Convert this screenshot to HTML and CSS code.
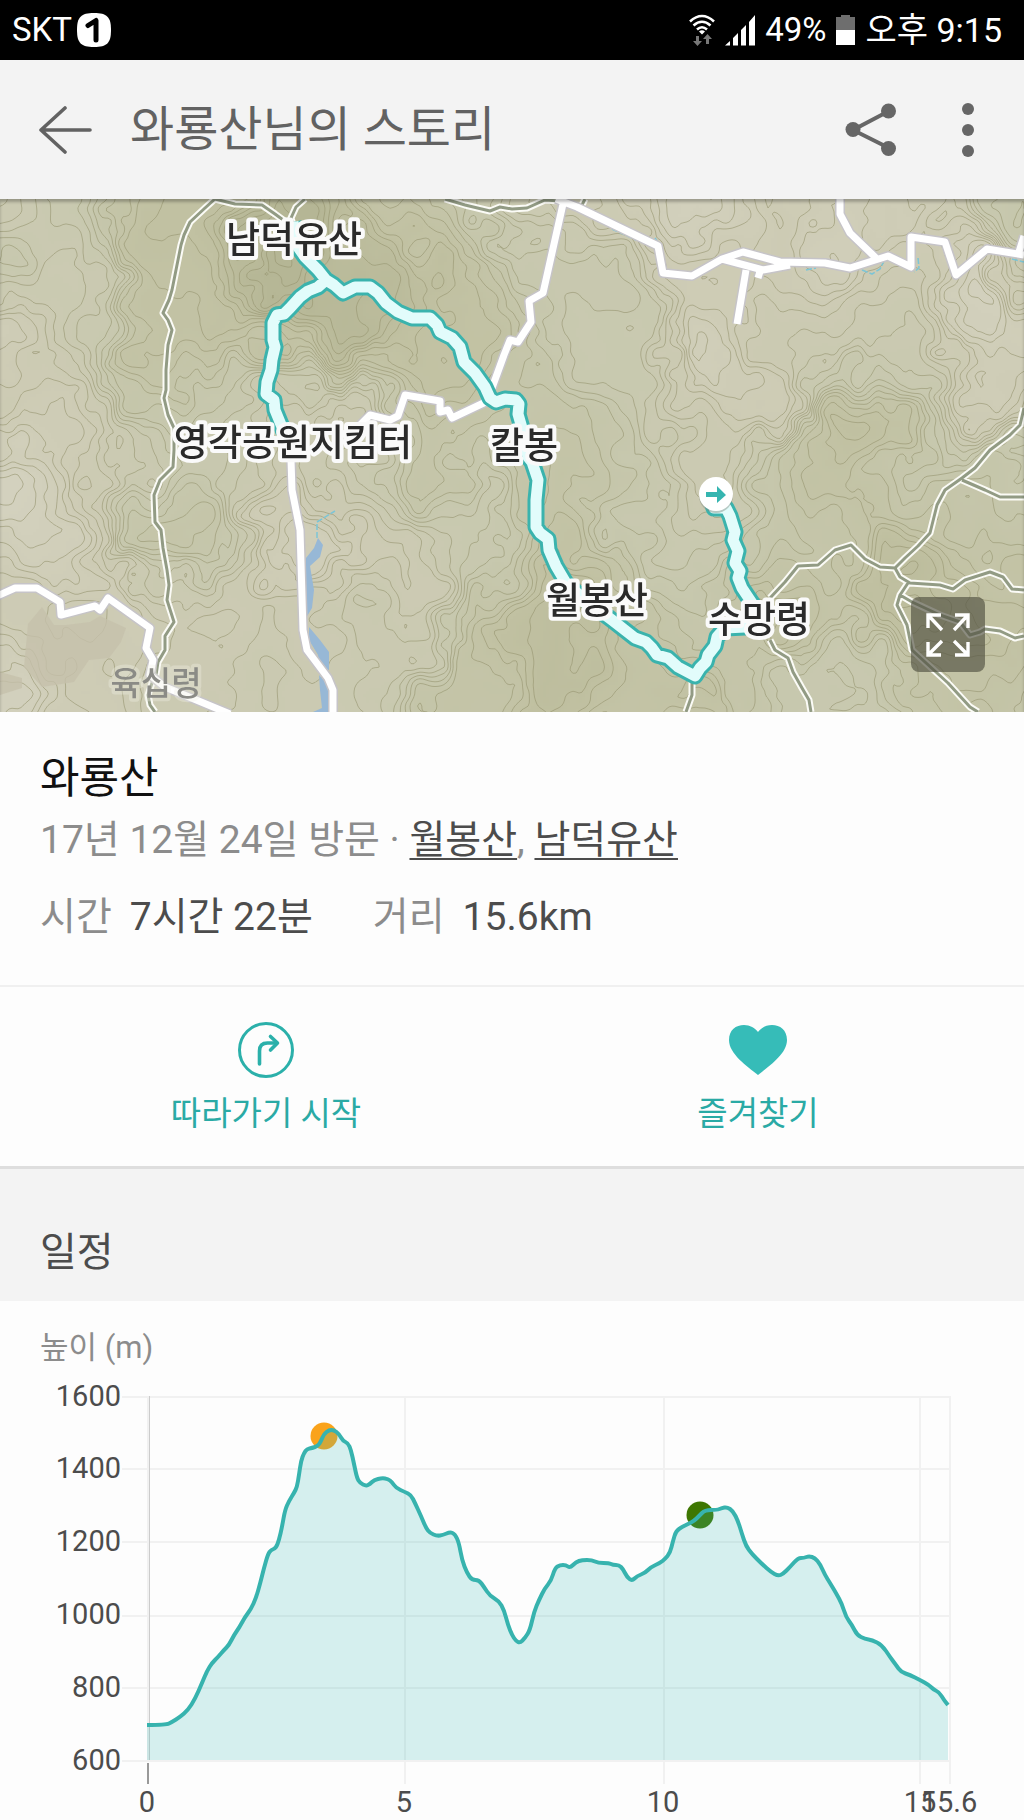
FILE: index.html
```html
<!DOCTYPE html>
<html lang="ko">
<head>
  <meta charset="UTF-8">
  <meta name="viewport" content="width=device-width, initial-scale=1.0">
  <title>와룡산님의 스토리</title>
  <link rel="stylesheet" href="styles.css">
</head>
<body>
  <div class="status-bar">
    <div class="status-left">
      <span class="carrier">SKT</span>
      <svg class="sim-icon" viewBox="0 0 34 34" aria-hidden="true">
        <path d="M17 0C30 0 34 4 34 17S30 34 17 34 0 30 0 17 4 0 17 0z" fill="#fff"/>
        <path d="M11 12.500 19 7.500V27" fill="none" stroke="#000" stroke-width="5" stroke-linecap="round" stroke-linejoin="round"/>
      </svg>
    </div>
    <div class="status-right">
      <svg class="wifi-icon" viewBox="0 0 26 32" aria-hidden="true">
        <g fill="none" stroke="#fff" stroke-width="2.600">
          <path d="M1 7.500Q13-3.500 25 7.500"/>
          <path d="M4.500 11.500Q13 4 21.500 11.500"/>
          <path d="M8 15.500Q13 11 18 15.500"/>
        </g>
        <path d="M10 17.500Q13 15 16 17.500L13 20.500z" fill="#fff"/>
        <path d="M7 22h3v5h3l-4.500 5L4 27h3zM17 30v-5h-3l4.500-5 4.500 5h-3v5z" fill="#777"/>
      </svg>
      <svg class="signal-icon" viewBox="0 0 30 31" aria-hidden="true">
        <path d="M0 30.500 5 26v4.500zM8 23l5-5v12.500H8zM16 15l5-5v20.500h-5zM24 7l6-7v30.500h-6z" fill="#fff"/>
      </svg>
      <span class="percent">49%</span>
      <svg class="battery-icon" viewBox="0 0 19 30" aria-hidden="true">
        <path d="M5 0h9v2h5v13H0V2h5z" fill="#6e6e6e"/>
        <path d="M0 15h19v15H0z" fill="#fff"/>
      </svg>
      <span class="clock">오후 9:15</span>
    </div>
  </div>

  <header class="app-bar">
    <button class="icon-btn back-btn" type="button" aria-label="뒤로">
      <svg viewBox="0 0 54 48" width="54" height="48">
        <path d="M51 24H2M26 2 2 24l24 22" fill="none" stroke="#626262" stroke-width="3.600" stroke-linecap="round" stroke-linejoin="round"/>
      </svg>
    </button>
    <h1>와룡산님의 스토리</h1>
    <button class="icon-btn share-btn" type="button" aria-label="공유">
      <svg viewBox="0 0 52 54" width="52" height="54">
        <path d="M44 8 8 27l36 18" fill="none" stroke="#666" stroke-width="4"/>
        <g fill="#666"><circle cx="43.500" cy="8" r="7.500"/><circle cx="8" cy="26.500" r="7.500"/><circle cx="43.500" cy="45.500" r="7.500"/></g>
      </svg>
    </button>
    <button class="icon-btn more-btn" type="button" aria-label="더보기">
      <svg viewBox="0 0 12 54" width="12" height="54">
        <g fill="#666"><circle cx="6" cy="6" r="6"/><circle cx="6" cy="27" r="6"/><circle cx="6" cy="48" r="6"/></g>
      </svg>
    </button>
  </header>

  <main>
    <section class="map">
      <canvas id="terrain" class="terrain" width="1024" height="513"></canvas>
      <svg class="map-lines" viewBox="0 199 1024 513">
        <!-- farmland -->
        <path d="M28 624l14-17 12 18 12 0 24-3 10-6 26 12-5 14-12 16-20 2-15 22-32 5-18-20zM0 672l22 6v10L0 695z" fill="#c5c1ab" opacity=".8"/>
        <!-- water -->
        <path d="M318 538l5 7-3 12-10 9 4 24-2 18-6 10v-60l8-10zM309 627l11 13 9 12v18l-9-2-2-13-9-15zM319 675l9 10v27h-15l9-4-2-18z" fill="#97b8d6"/>
        <g class="stream">
          <path d="M317 538v-16l18-11"/>
          <path d="M612 229l24 11M655 238l4 6M806 270l10-2M862 270l10 4 8-5 4-8M918 258l1 10-5 4M1012 259l12 3"/>
        </g>
        <!-- hiking paths -->
        <g class="path-edge">
          <path id="hiking" d="M215 199 205 208 190 222 184 235 181 245 177 265 172 290 169 300 163 313 168 320 172 330 168 345 166 370 166 390 164 398 168 415 174 428 174 450 173 467 160 480 154 495 155 522 161 530 163 548 167 570 169 585 167 600 174 622 165 636 165 650 158 662 156 675 152 683 148 695 150 705 155 712
            M215 199 235 204 262 205 275 214 290 225M305 199 296 207 291 218 294 228
            M445 199 465 205 490 211 500 207 512 209 527 208 545 200 560 201M585 199 582 205 583 212
            M770 598 785 582 798 566 818 565 835 550 851 545 865 559 880 567 895 568 905 558 918 546 930 533 937 505 945 490 962 478 975 468 990 450 1010 435 1020 425 1024 408
            M962 480 985 490 1000 497 1024 497
            M895 568 900 577 910 583 940 585 953 589 965 580 990 572 1003 577 1012 589 1024 590
            M908 583 900 595 897 605 907 625 912 650 925 662 948 683 970 707 978 712
            M900 595 912 602 940 615 960 622 970 635 980 632 985 629 1000 631 1015 638 1024 636
            M770 640 775 650 788 658 793 672 802 688 809 700 811 712
            M692 680 692 695 686 712"/>
        </g>
        <use class="path-core" href="#hiking"/>
        <!-- roads -->
        <g class="road-edge">
          <path id="roads" d="M556 199 577 207 658 246 663 273 692 276 722 259 743 252 780 262 825 263 850 268 888 256 911 267 911 237 945 242 956 275 987 249 1024 255
            M722 259 763 270 790 265M761 268 758 278M746 270 737 324
            M840 195 840 214 850 233 876 258
            M563 204 543 293 529 301 531 322 518 342 510 340 504 355 492 388
            M492 399 452 418 448 410 440 412 440 401 405 395 398 416 390 420 370 415 360 425
            M1024 236 1018 255
            M291 460 292 490 300 530 303 630 307 650 328 678 333 690 333 712
            M-5 597 15 588 37 588 60 602 61 615 95 606 100 610 108 598 150 628 146 648 153 660 150 675 165 687 230 714"/>
        </g>
        <use class="road-core" href="#roads"/>
        <!-- recorded route -->
        <g class="route-edge">
          <path id="route" d="M293 222 298 247 305 257 318 270 326 280 318 287 308 291 300 297 290 308 284 314 277 315 273 323 273 340 275 347 272 360 271 370 267 382 266 394 274 400 275 410 284 432
            M326 280 334 285 343 293 355 287 370 287 378 293 386 303 398 312 412 318 430 318 437 325 440 332 452 338 460 347 464 362 475 373 485 387 490 398 496 402 505 399 516 400 519 404 518 414 522 428 528 457 532 462 538 480 536 500 536 527 540 533 548 539 549 550 556 566 566 583 576 592 592 605 612 620 635 638 646 642 652 648 657 655 668 658 678 667 695 676 700 668 706 662 708 655 715 646 717 637 725 628 745 627 760 615 750 600 742 588 738 578 740 571 735 563 738 551 733 540 735 532 730 516 726 508 714 508 711 498"/>
        </g>
        <use class="route-core" href="#route"/>
        <circle cx="716" cy="496" r="17" fill="#7f8b80" opacity=".45"/>
        <circle cx="716" cy="494" r="17" fill="#fff"/>
        <path d="M706 492h11v-6l9 9-9 8v-6h-11z" fill="#35b5b0"/>
        <!-- place names -->
        <g class="place">
          <text x="294" y="253">남덕유산</text>
          <text x="293" y="456">영각공원지킴터</text>
          <text x="524" y="459">칼봉</text>
          <text x="597" y="614">월봉산</text>
          <text x="759" y="633">수망령</text>
        </g>
        <text class="place-minor" x="156" y="695">육십령</text>
      </svg>
      <button class="expand-btn" type="button" aria-label="지도 크게 보기">
        <svg viewBox="0 0 44 44" width="44" height="44">
          <path d="M16 17 2 2M2 15V2h13M28 17 42 2M29 2h13v13M16 28 2 42M2 29v13h13M28 28l14 14M29 42h13V29" fill="none" stroke="#fff" stroke-width="3.400"/>
        </svg>
      </button>
    </section>

    <section class="info">
      <h2>와룡산</h2>
      <p class="visit">17년 12월 24일 방문 · <a href="#">월봉산</a>, <a href="#">남덕유산</a></p>
      <dl class="stats">
        <div><dt>시간</dt><dd>7시간 22분</dd></div>
        <div><dt>거리</dt><dd>15.6km</dd></div>
      </dl>
    </section>

    <div class="actions">
      <button type="button">
        <svg viewBox="0 0 56 56" width="56" height="56" aria-hidden="true">
          <g fill="none" stroke="#2bb0aa" stroke-width="3">
            <circle cx="28" cy="28" r="26.500"/>
            <path d="M21.500 42V29q0-8 8-8h9" stroke-width="3.600" stroke-linecap="round"/>
            <path d="M32.500 14.500l7 6.500-7 7" stroke-width="3.600" stroke-linecap="round" stroke-linejoin="round"/>
          </g>
        </svg>
        <span>따라가기 시작</span>
      </button>
      <button type="button">
        <svg viewBox="0 0 58 56" width="58" height="56" aria-hidden="true">
          <path d="M29 53C18 44 0 32 0 18 0 8 7 3 15 3c6 0 11 3 14 7 3-4 8-7 14-7 8 0 15 5 15 15 0 14-18 26-29 35z" fill="#36bcb8"/>
        </svg>
        <span>즐겨찾기</span>
      </button>
    </div>

    <h2 class="section-title">일정</h2>

    <section class="elevation">
      <h3>높이 (m)</h3>
      <svg class="chart" viewBox="0 1380 1024 440" role="img" aria-label="고도 그래프">
        <g class="grid">
          <path d="M122 1397H951M122 1469H951M122 1542H951M122 1616H951M122 1688H951M122 1761H951"/>
          <path d="M148 1396V1762M405 1396V1784M664 1396V1784M920 1396V1784M950 1396V1784"/>
        </g>
        <path d="M149.500 1396V1760" stroke="#ccc"/>
        <path d="M148 1763V1784" stroke="#999" stroke-width="2"/>
        <circle cx="324" cy="1436" r="13.500" fill="#faa31b"/>
        <circle cx="700" cy="1515" r="13.500" fill="#3e7702"/>
        <path id="chart-area" class="area"/>
        <path id="chart-line" class="line"/>
        <g class="axis-y">
          <text x="121" y="1406">1600</text>
          <text x="121" y="1478">1400</text>
          <text x="121" y="1551">1200</text>
          <text x="121" y="1624">1000</text>
          <text x="121" y="1697">800</text>
          <text x="121" y="1770">600</text>
        </g>
        <g class="axis-x">
          <text x="147" y="1812">0</text>
          <text x="404" y="1812">5</text>
          <text x="663" y="1812">10</text>
          <text x="920" y="1812">15</text>
          <text x="949" y="1812">15.6</text>
        </g>
      </svg>
    </section>
  </main>

  <script src="story.js"></script>
</body>
</html>
```
FILE: styles.css
```css
* {
  box-sizing: border-box;
}
body {
  margin: 0;
  background: #fdfdfd;
  color: #4c4c4c;
  font-family: Roboto, "Noto Sans CJK KR", sans-serif;
}
h1, h2, h3, p, dl, dd {
  margin: 0;
  font-weight: 400;
}
button {
  padding: 0;
  border: none;
  background: none;
  font-family: inherit;
  cursor: pointer;
}
svg {
  display: block;
}

/* status bar */
.status-bar {
  display: flex;
  justify-content: space-between;
  align-items: center;
  height: 60px;
  padding: 0 22px 0 12px;
  background: #000;
  color: #fff;
  font-size: 34px;
  line-height: 60px;
}
.status-left, .status-right {
  display: flex;
  align-items: center;
}
.status-left {
  gap: 5px;
}
.status-right {
  gap: 10px;
}
.carrier, .percent {
  font-size: 33px;
}
.sim-icon {
  width: 34px;
  height: 34px;
}
.wifi-icon {
  width: 26px;
  height: 32px;
}
.signal-icon {
  width: 30px;
  height: 31px;
}
.battery-icon {
  width: 19px;
  height: 30px;
}

/* app bar */
.app-bar {
  display: flex;
  align-items: center;
  height: 139px;
  padding: 0 50px 0 39px;
  background: #f3f3f3;
}
.app-bar h1 {
  flex: 1;
  margin-left: 37px;
  color: #626262;
  font-size: 48px;
  line-height: 64px;
}
.more-btn {
  margin-left: 65px;
}

/* map */
.map {
  position: relative;
  overflow: hidden;
  background: #c8c8ae;
}
.map::after {
  content: "";
  position: absolute;
  inset: 0;
  box-shadow: inset 0 3px 3px rgba(0, 0, 0, 0.25);
  pointer-events: none;
}
.terrain {
  position: absolute;
  inset: 0;
  width: 100%;
  height: 100%;
}
.map-lines {
  position: relative;
  width: 100%;
}
.map-lines path {
  stroke-linejoin: round;
}
.stream {
  fill: none;
  stroke: #7cc5d6;
  stroke-width: 1.5;
  stroke-dasharray: 6 2;
}
.path-edge, .path-core, .road-edge, .road-core, .route-edge, .route-core {
  fill: none;
}
.path-edge {
  stroke: #fbfbf6;
  stroke-width: 7;
}
.path-core {
  stroke: #929b84;
  stroke-width: 3;
}
.road-edge {
  stroke: #c6c4c8;
  stroke-width: 10;
}
.road-core {
  stroke: #fff;
  stroke-width: 7;
}
.route-edge {
  stroke: #3ab3ad;
  stroke-width: 17;
}
.route-core {
  stroke: #e2fcfb;
  stroke-width: 11;
}
.place, .place-minor {
  font-family: "Noto Sans CJK KR", sans-serif;
  font-weight: 500;
  text-anchor: middle;
  paint-order: stroke;
  stroke-linejoin: round;
}
.place {
  fill: #2a2a2a;
  font-size: 37px;
  stroke: #fafafa;
  stroke-width: 8;
}
.place-minor {
  fill: #8b8b86;
  font-size: 33px;
  stroke: rgba(240, 240, 230, 0.35);
  stroke-width: 7;
}
.expand-btn {
  position: absolute;
  right: 39px;
  bottom: 40px;
  display: flex;
  align-items: center;
  justify-content: center;
  width: 74px;
  height: 75px;
  border-radius: 8px;
  background: rgba(80, 80, 65, 0.65);
}

/* summary */
.info {
  padding: 38px 40px 40px;
  border-bottom: 2px solid #f0f0f0;
  font-size: 39px;
  line-height: 56px;
}
.info h2 {
  color: #111;
  font-size: 43px;
}
.visit {
  margin-top: 6px;
  color: #8c8c8c;
}
.visit a {
  color: #4c4c4c;
  text-decoration-thickness: 2px;
  text-underline-offset: 5px;
  text-decoration-skip-ink: none;
}
.stats {
  display: flex;
  gap: 60px;
  margin-top: 21px;
}
.stats div {
  display: flex;
  gap: 18px;
}
.stats dt {
  color: #8c8c8c;
}

.actions {
  display: grid;
  grid-template-columns: 1fr 1fr;
  padding: 35px 20px 28px;
  border-bottom: 3px solid #dedede;
}
.actions button {
  display: flex;
  flex-direction: column;
  align-items: center;
  gap: 12px;
  color: #2aaaa5;
  font-size: 33px;
  line-height: 48px;
}

.section-title {
  padding: 60px 40px 24px;
  background: #f3f3f3;
  font-size: 40px;
  line-height: 48px;
}

/* elevation chart */
.elevation h3 {
  padding: 27px 40px 12px;
  color: #8c8c8c;
  font-size: 31px;
  line-height: 40px;
}
.chart {
  width: 100%;
  font-size: 29px;
}
.grid {
  fill: none;
  stroke: #f1f1f1;
  stroke-width: 2;
}
.area {
  fill: #37b8b2;
  fill-opacity: 0.2;
}
.line {
  fill: none;
  stroke: #37b3ae;
  stroke-width: 4;
  stroke-linejoin: round;
}
.axis-y, .axis-x {
  fill: #4c4c4c;
}
.axis-y {
  text-anchor: end;
}
.axis-x {
  text-anchor: middle;
}
```
FILE: story.js
```js
// elevation profile, x/y pairs in chart units
const profile = [
  147,1725, 166,1725, 172,1722, 180,1717, 188,1710, 195,1699, 202,1683, 207,1671, 212,1663, 218,1657,
  224,1650, 229,1645, 234,1635, 239,1628, 245,1617, 251,1609, 256,1598, 260,1584, 264,1568, 268,1554,
  271,1550, 276,1548, 279,1540, 282,1527, 285,1510, 289,1501, 294,1493, 297,1487, 299,1475, 301,1461,
  304,1453, 307,1449, 312,1448, 318,1446, 321,1441, 324,1434, 329,1430, 334,1430, 339,1434, 343,1441,
  348,1443, 351,1450, 354,1464, 357,1478, 360,1483, 366,1486, 370,1484, 374,1480, 382,1478, 388,1479,
  392,1482, 396,1488, 405,1492, 411,1495, 415,1503, 421,1516, 426,1528, 430,1533, 437,1536, 443,1535,
  450,1532, 455,1534, 459,1543, 462,1560, 467,1573, 472,1580, 479,1580, 484,1587, 490,1596, 499,1601,
  504,1610, 508,1625, 512,1635, 516,1641, 520,1643, 525,1638, 530,1630, 534,1612, 539,1600, 545,1588,
  551,1581, 555,1568, 560,1565, 566,1565, 570,1568, 576,1562, 582,1560, 592,1560, 598,1563, 609,1563,
  613,1565, 619,1565, 623,1569, 627,1577, 632,1581, 637,1576, 645,1573, 651,1567, 660,1563, 665,1559,
  670,1553, 673,1541, 676,1531, 682,1527, 688,1524, 694,1521, 699,1516, 705,1510, 717,1510, 722,1508,
  727,1507, 733,1511, 738,1521, 742,1534, 746,1546, 752,1554, 762,1564, 771,1572, 778,1576, 783,1574,
  790,1567, 798,1558, 804,1558, 809,1556, 815,1558, 820,1564, 825,1575, 830,1583, 836,1593, 842,1604,
  846,1617, 852,1625, 857,1635, 865,1639, 872,1640, 882,1645, 890,1657, 896,1665, 901,1672, 910,1675,
  920,1680, 929,1685, 934,1690, 939,1692, 944,1700, 948,1705
];

function drawProfile() {
  const last = profile.length - 2;
  let d = `M${profile[0]} ${profile[1]}`;
  // curve through the midpoints so that the corners come out round
  for (let i = 2; i < last; i += 2) {
    const mx = (profile[i] + profile[i + 2]) / 2;
    const my = (profile[i + 1] + profile[i + 3]) / 2;
    d += `Q${profile[i]} ${profile[i + 1]} ${mx} ${my}`;
  }
  d += `L${profile[last]} ${profile[last + 1]}`;
  document.getElementById('chart-line').setAttribute('d', d);
  document.getElementById('chart-area').setAttribute('d', `${d}V1760H147Z`);
}

// known heights: x, y, height (0 = valley, 1 = summit)
const heights = [
  [290, 60, 1.1], [360, 95, 0.95], [180, 40, 0.75], [165, 130, 0.7], [60, 20, 0.5], [20, 130, 0.3],
  [70, 90, 0.5], [60, 230, 0.25], [10, 300, 0.05], [170, 320, 0.7], [100, 400, 0.2], [30, 470, 0.1],
  [300, 330, 0.25], [320, 470, 0.2], [230, 430, 0.4], [350, 260, 0.4], [220, 220, 0.5], [450, 170, 0.75],
  [430, 30, 0.65], [540, 230, 0.7], [480, 350, 0.6], [500, 480, 0.8], [410, 400, 0.4], [600, 420, 0.8],
  [690, 470, 0.7], [640, 300, 0.5], [600, 130, 0.4], [700, 50, 0.15], [740, 170, 0.2], [720, 260, 0.35],
  [860, 240, 0.75], [900, 140, 0.35], [960, 90, 0.05], [1010, 30, 0.5], [980, 180, 0.3], [900, 370, 0.9],
  [800, 390, 0.75], [760, 450, 0.6], [950, 480, 0.75], [1010, 280, 0.5], [1000, 400, 0.65], [560, 30, 0.4],
  [840, 20, 0.2], [850, 480, 0.5]
];

function hash(x, y) {
  const s = Math.sin(x * 127.1 + y * 311.7) * 43758.5453;
  return s - Math.floor(s);
}

function noise(x, y) {
  const ix = Math.floor(x), iy = Math.floor(y);
  let fx = x - ix, fy = y - iy;
  fx = fx * fx * (3 - 2 * fx);
  fy = fy * fy * (3 - 2 * fy);
  const top = hash(ix, iy) * (1 - fx) + hash(ix + 1, iy) * fx;
  const bottom = hash(ix, iy + 1) * (1 - fx) + hash(ix + 1, iy + 1) * fx;
  return top * (1 - fy) + bottom * fy - 0.5;
}

function heightAt(px0, py0) {
  // bend the coordinates so that the slopes get gullies
  const x = px0 + noise(px0 / 26, py0 / 26) * 38 + noise(px0 / 11, py0 / 11) * 11;
  const y = py0 + noise(px0 / 26 + 50, py0 / 26) * 38 + noise(px0 / 11 + 50, py0 / 11) * 11;
  let sum = 0, weights = 0;
  for (const [px, py, h] of heights) {
    const d = (px - x) ** 2 + (py - y) ** 2 + 2500;
    const w = 1 / (d * d);
    sum += w * h;
    weights += w;
  }
  return sum / weights + noise(x / 70, y / 70) * 0.3;
}

function shade(h) {
  const stops = [[211, 209, 190], [205, 203, 180], [199, 200, 174], [193, 193, 162], [181, 182, 149]];
  const t = Math.max(0, Math.min(3.99, h * 3.7));
  const i = Math.floor(t);
  return stops[i].map((c, n) => c + (stops[i + 1][n] - c) * (t - i));
}

function drawTerrain() {
  const canvas = document.getElementById('terrain');
  const ctx = canvas.getContext('2d');
  const w = canvas.width, h = canvas.height;
  const step = 3, cols = Math.ceil(w / step) + 1, rows = Math.ceil(h / step) + 1;
  const grid = [];
  for (let r = 0; r < rows; r++) {
    grid.push([]);
    for (let c = 0; c < cols; c++) {
      const v = heightAt(c * step, r * step);
      grid[r].push(v);
      ctx.fillStyle = `rgb(${shade(v).map(Math.round).join(',')})`;
      ctx.fillRect(c * step, r * step, step, step);
    }
  }

  // contour lines, marching squares
  ctx.strokeStyle = 'rgba(150, 148, 112, 0.6)';
  ctx.lineWidth = 1;
  ctx.beginPath();
  for (let r = 0; r < rows - 1; r++) {
    for (let c = 0; c < cols - 1; c++) {
      const v = [grid[r][c], grid[r][c + 1], grid[r + 1][c + 1], grid[r + 1][c]];
      const corners = [[c, r], [c + 1, r], [c + 1, r + 1], [c, r + 1]];
      const gap = 0.045;
      for (let k = Math.ceil(Math.min(...v) / gap); k * gap < Math.max(...v); k++) {
        const level = k * gap;
        const hits = [];
        for (let e = 0; e < 4; e++) {
          const n = (e + 1) % 4;
          if ((v[e] < level) !== (v[n] < level)) {
            const t = (level - v[e]) / (v[n] - v[e]);
            hits.push([
              (corners[e][0] + (corners[n][0] - corners[e][0]) * t) * step,
              (corners[e][1] + (corners[n][1] - corners[e][1]) * t) * step
            ]);
          }
        }
        for (let i = 0; i + 1 < hits.length; i += 2) {
          ctx.moveTo(...hits[i]);
          ctx.lineTo(...hits[i + 1]);
        }
      }
    }
  }
  ctx.stroke();
}

drawProfile();
drawTerrain();
```
